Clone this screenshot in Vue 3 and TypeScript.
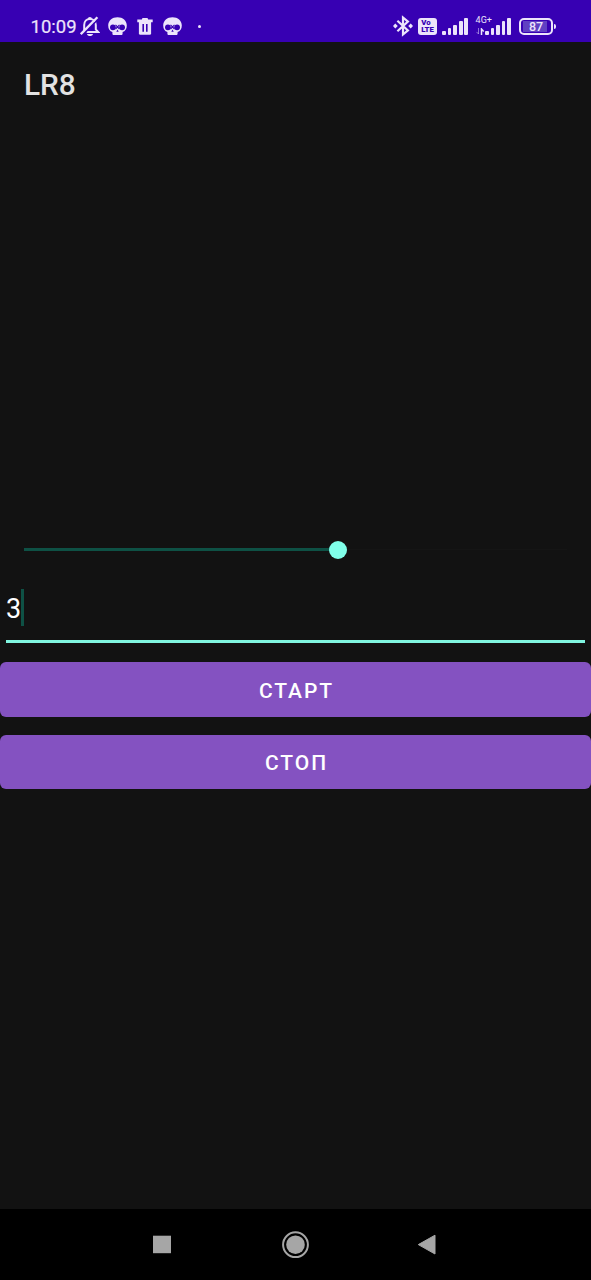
<script setup lang="ts">
import { ref } from 'vue'

const title = 'LR8'
const progress = ref(57.8)
const value = ref('3')
const buttons = ['СТАРТ', 'СТОП']
const bars = [4, 7, 10, 13.5, 17]
</script>

<template>
  <div class="screen">
    <header class="status">
      <span class="clock">10:09</span>
      <svg class="bell" width="20" height="21" viewBox="0 0 20 21">
        <path d="M4.2 14V9C4.2 5.500 6.400 3 9.900 3s5.900 2.500 5.900 6v4.300l2.500 2.800H6.500" fill="none" stroke="currentColor" stroke-width="2" />
        <path d="M7.800 3a2.100 2.100 0 0 1 4.200 0z M7 18h6c-.5 2.700-5.500 2.700-6 0z" fill="currentColor" />
        <path d="M3.500 18.100 19 2.200" stroke="#3700b3" stroke-width="1.600" />
        <path d="M.8 18.200 17.400 1.200" stroke="currentColor" stroke-width="2.300" />
      </svg>
      <svg class="skull" width="19" height="19" viewBox="0 0 19 19">
        <use href="#skull-shape" />
        <defs>
          <g id="skull-shape">
            <path d="M9.500.2C4.200.2.2 3.600.2 8.500c0 3.500 1.700 5.700 4.200 6.600v1.500c0 1 .6 1.500 1.500 1.500h7.200c.9 0 1.500-.5 1.500-1.500v-1.500c2.500-.9 4.200-3.100 4.200-6.600C18.800 3.600 14.800.2 9.500.2z" fill="currentColor" />
            <ellipse cx="4.900" cy="10.300" rx="2.900" ry="2.900" fill="#3700b3" />
            <ellipse cx="14.100" cy="10.300" rx="2.900" ry="2.900" fill="#3700b3" />
            <path d="m8.300 14.700 1.200-2.300 1.200 2.300z" fill="#3700b3" />
            <path d="m7.500 7.800 4 4.200M11.500 7.800l-4 4.200" stroke="#3700b3" stroke-width="1.100" />
          </g>
        </defs>
      </svg>
      <svg class="trash" width="16" height="17" viewBox="0 0 16 17">
        <path d="M.3 1.600h4.500L5.500 0h5l.7 1.600h4.500v2.600H.3z" fill="currentColor" />
        <path d="M1.900 4h12.200v11.300q0 1.500-1.500 1.500H3.400q-1.500 0-1.500-1.500z" fill="currentColor" />
        <path d="M6.200 6v7.800M9.800 6v7.800" stroke="#3700b3" stroke-width="1.600" />
      </svg>
      <svg class="skull second" width="19" height="19" viewBox="0 0 19 19">
        <use href="#skull-shape" />
      </svg>
      <i class="dot"></i>
      <div class="right">
        <svg class="bt" width="20" height="22" viewBox="0 0 20 22">
          <path d="m4.400 5.700 10.500 9.700L10 19.500v-17l4.900 4.100-10.500 9.700" fill="none" stroke="currentColor" stroke-width="2.200" />
          <path d="m2.300 8.500 2.500 2.500-2.500 2.500L0 11zM17.700 8.500 20 11l-2.300 2.500-2.500-2.500z" fill="currentColor" />
        </svg>
        <span class="volte"><b>Vo</b><b>LTE</b></span>
        <span class="bars"><i v-for="h in bars" :key="h" :style="{ height: h + 'px' }"></i></span>
        <span class="mobile">
          <small>4G+</small>
          <svg width="9" height="7" viewBox="0 0 9 7">
            <path d="M2.500 0v6M.5 3.900l2 2.100" fill="none" stroke="currentColor" opacity=".5" />
            <path d="M5.500 7V1l2.200 2.500" fill="none" stroke="currentColor" stroke-width="1.500" />
          </svg>
          <span class="bars"><i v-for="h in bars" :key="h" :style="{ height: h + 'px' }"></i></span>
        </span>
        <span class="battery"><span>87</span></span>
        <i class="nub"></i>
      </div>
    </header>

    <h1>{{ title }}</h1>

    <main>
      <div class="slider">
        <div class="fill" :style="{ width: progress + '%' }"></div>
        <div class="thumb"></div>
        <div class="rest"></div>
      </div>
      <div class="field">
        <span>{{ value }}</span><i class="caret"></i>
      </div>
      <button v-for="label in buttons" :key="label" type="button">{{ label }}</button>
    </main>

    <nav>
      <svg width="20" height="20" viewBox="0 0 20 20"><path d="M1 .700h18v17.500H1z" fill="currentColor" /></svg>
      <svg width="28" height="28" viewBox="0 0 28 28">
        <circle cx="14.500" cy="13.700" r="12.400" fill="none" stroke="currentColor" stroke-width="2" />
        <circle cx="14.500" cy="13.700" r="9.300" fill="currentColor" />
      </svg>
      <svg width="20" height="22" viewBox="0 0 20 22"><path d="M18 1.200v18.800L1.300 10.600z" fill="currentColor" stroke="currentColor" stroke-linejoin="round" /></svg>
    </nav>
  </div>
</template>

<style>
body {
  margin: 0;
  background: #121212;
}
</style>

<style scoped>
.screen {
  width: 591px;
  height: 1280px;
  display: flex;
  flex-direction: column;
  overflow: hidden;
  background: #121212;
  color: #fff;
  font-family: Roboto, "Liberation Sans", sans-serif;
}
.status {
  box-sizing: border-box;
  height: 41.500px;
  flex: none;
  display: flex;
  align-items: center;
  padding: 10.500px 35px 0 30px;
  background: #3700b3;
  color: #ece4fb;
}
.status svg,
.status i {
  flex: none;
  display: block;
}
.clock {
  width: 50px;
  padding-top: 1px;
  padding-left: .5px;
  box-sizing: border-box;
  font-size: 18.500px;
  line-height: 22px;
  -webkit-text-stroke: 0.2px currentColor;
}
.skull { margin-left: 8px; }
.trash { margin-left: 10px; }
.skull.second { margin-left: 10px; }
.dot {
  width: 3px;
  height: 3px;
  margin-left: 16px;
  border-radius: 50%;
  background: currentColor;
}
.right {
  margin-left: auto;
  display: flex;
  align-items: center;
}
.volte {
  width: 19px;
  height: 17px;
  margin-left: 5px;
  border-radius: 3px;
  background: currentColor;
  display: flex;
  flex-direction: column;
  justify-content: center;
}
.volte b {
  padding-left: 3px;
  font-size: 7.800px;
  line-height: 7px;
  font-weight: 900;
  color: #3700b3;
}
.bars {
  display: flex;
  align-items: flex-end;
  gap: 1.900px;
  height: 17px;
}
.bars i {
  width: 3.680px;
  border-radius: 1px;
  background: currentColor;
}
.volte + .bars { margin-left: 5px; }
.mobile {
  position: relative;
  margin-left: 17px;
}
.mobile small {
  position: absolute;
  left: -9.500px;
  top: -2px;
  font-size: 9px;
  line-height: 9px;
}
.mobile svg {
  position: absolute;
  left: -9px;
  bottom: 0;
}
.battery {
  box-sizing: border-box;
  width: 34px;
  height: 17px;
  margin-left: 8px;
  padding: 1px 2px;
  border: 2px solid currentColor;
  border-radius: 5px;
}
.battery span {
  display: block;
  width: 24px;
  height: 11px;
  padding-left: 6px;
  box-sizing: border-box;
  background: #6040c2;
  font-size: 12.500px;
  line-height: 12px;
  font-weight: 500;
}
.nub {
  width: 2px;
  height: 5px;
  margin-left: 1px;
  border-radius: 0 2px 2px 0;
  background: currentColor;
}
h1 {
  margin: 0;
  padding: 25.500px 24px 1px;
  height: 36px;
  font-size: 29.800px;
  line-height: 36px;
  font-weight: 500;
  color: #e2e2e2;
}
main {
  flex: 1;
  padding-top: 436px;
}
.slider {
  height: 19px;
  margin: 0 24px;
  display: flex;
  align-items: center;
}
.fill {
  height: 3px;
  background: #0e5145;
}
.thumb {
  width: 18px;
  height: 18px;
  margin-left: -9px;
  border-radius: 50%;
  background: #80ffe9;
}
.rest {
  flex: 1;
  height: 1px;
  background: #151515;
}
.field {
  box-sizing: border-box;
  height: 84px;
  margin: 0 6px 19px;
  padding-top: 30px;
  border-bottom: 3px solid #80f5e0;
  display: flex;
  align-items: flex-start;
  font-size: 27px;
  line-height: 40px;
}
.caret {
  width: 3px;
  height: 37px;
  background: #0e5145;
}
button {
  display: block;
  width: 100%;
  height: 54.500px;
  margin: 0 0 18px;
  padding: 3px 0 0 2px;
  border: 0;
  border-radius: 6px;
  background: #8452c1;
  color: #fff;
  font: 500 21px Roboto, "Liberation Sans", sans-serif;
  letter-spacing: 1.900px;
}
nav {
  box-sizing: border-box;
  height: 71px;
  flex: none;
  display: flex;
  align-items: center;
  justify-content: space-between;
  padding: 0 154px 0 152px;
  background: #000;
  color: #a6a6a6;
}
</style>
